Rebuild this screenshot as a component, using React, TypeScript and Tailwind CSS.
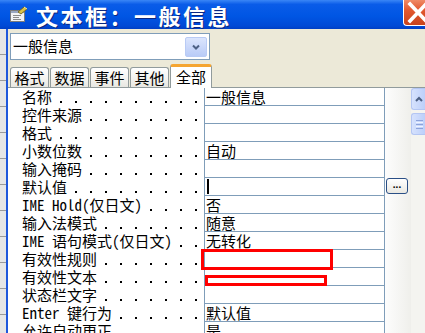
import React from 'react';

const F = "font-['Noto_Sans_Mono_CJK_SC','Noto_Sans_CJK_SC',sans-serif]";

const rows: { label: string; value?: string; caret?: boolean }[] = [
  { label: '名称', value: '一般信息' },
  { label: '控件来源' },
  { label: '格式' },
  { label: '小数位数', value: '自动' },
  { label: '输入掩码' },
  { label: '默认值', caret: true },
  { label: 'IME Hold(仅日文)', value: '否' },
  { label: '输入法模式', value: '随意' },
  { label: 'IME 语句模式(仅日文)', value: '无转化' },
  { label: '有效性规则' },
  { label: '有效性文本' },
  { label: '状态栏文字' },
  { label: 'Enter 键行为', value: '默认值' },
  { label: '允许自动更正', value: '是' },
];

const tabs = ['格式', '数据', '事件', '其他'];

function FormIcon() {
  return (
    <svg width="19" height="17" viewBox="0 0 19 17" className="shrink-0">
      <rect x="1.5" y="4.5" width="14" height="11" fill="#f4f4f4" stroke="#7c7c7c" />
      <rect x="2" y="5" width="13" height="2" fill="#9aa7c0" />
      <path d="M4 9.5h8M4 11.5h6M4 13.5h8" stroke="#8a8a8a" />
      <path d="M9 6 L15 1 L18 3 L12 8 Z" fill="#d8c24a" stroke="#6b5a10" strokeWidth="0.8" />
      <path d="M15 1 L18 3" stroke="#fff3a0" />
    </svg>
  );
}

function CloseButton() {
  return (
    <div className="shrink-0 -mr-[8px] self-start w-[30px] h-[26px] rounded-bl-[4px] border-l border-b border-white bg-[linear-gradient(#ef8a66,#e2582f_40%,#c8431d)]">
      <svg width="30" height="26" viewBox="0 0 30 26">
        <path d="M6 4 L22 21 M22 4 L6 21" stroke="#fff" strokeWidth="3.6" strokeLinecap="square" />
      </svg>
    </div>
  );
}

function Dots() {
  return (
    <span className="flex items-end pb-[3px] ml-[8px] shrink-0">
      {Array.from({ length: 14 }).map((_, i) => (
        <span key={i} className="w-[2px] h-[2px] bg-black mr-[13px] shrink-0" />
      ))}
    </span>
  );
}

function Row({ label, value, caret }: { label: string; value?: string; caret?: boolean }) {
  return (
    <div className="flex h-[18px] shrink-0 text-[15px] leading-[17px]">
      <div className="w-[196px] flex pl-[14px] overflow-hidden whitespace-nowrap">
        <span className="shrink-0">{label}</span>
        <Dots />
      </div>
      <div className="w-[181px] border-x border-b border-[#7F9DB9] pl-[1px] flex items-center whitespace-nowrap overflow-hidden">
        {caret ? <span className="w-[2px] h-[15px] bg-black ml-[1px]" /> : value}
      </div>
      <div className="flex-1 bg-[linear-gradient(90deg,#fdfdfd,#efefeb)]">
        {caret && (
          <div className="ml-[1px] w-[22px] h-[16px] rounded-[3px] border border-[#2a4f86] bg-[linear-gradient(#ffffff,#e9e8e2)] flex items-center justify-center">
            <span className="text-[10px] font-bold leading-none font-['Liberation_Sans',sans-serif] -mt-[3px]">...</span>
          </div>
        )}
      </div>
    </div>
  );
}

function ScrollBar() {
  return (
    <div className="flex-1 flex flex-col bg-[#F4F4F0]">
      <div className="h-[22px] rounded-l-[3px] border border-r-0 border-[#b4c6f3] bg-[linear-gradient(90deg,#d6e2fd,#bccffa)] flex items-center pl-[3px]">
        <svg width="8" height="6" viewBox="0 0 8 6">
          <path d="M1 5 L4 2 L7 5" fill="none" stroke="#4d6185" strokeWidth="2" />
        </svg>
      </div>
      <div className="mt-[3px] h-[22px] rounded-l-[3px] border border-r-0 border-[#b4c6f3] bg-[linear-gradient(90deg,#d6e2fd,#bccffa)] flex flex-col justify-center gap-[1px] pl-[4px]">
        <span className="w-[7px] h-[1px] bg-[#8da3db]" />
        <span className="w-[7px] h-[1px] bg-[#eef3ff]" />
        <span className="w-[7px] h-[1px] bg-[#8da3db]" />
        <span className="w-[7px] h-[1px] bg-[#eef3ff]" />
        <span className="w-[7px] h-[1px] bg-[#8da3db]" />
      </div>
    </div>
  );
}

export default function App() {
  return (
    <div className={`w-[425px] h-[333px] overflow-hidden bg-[#ECE9D8] ${F} text-black flex flex-col`}>
      <div className="h-[29px] shrink-0 flex items-center bg-[linear-gradient(#3a86f6,#0a5ce8_15%,#0056e4_55%,#0049d5_90%,#003fc4)]">
        <div className="ml-[9px]">
          <FormIcon />
        </div>
        <span className="ml-[8px] text-white font-bold text-[22px] leading-none tracking-[2.5px] [text-shadow:1px_1px_0_#0b2680] font-['Noto_Sans_CJK_SC',sans-serif]">
          文本框：一般信息
        </span>
        <div className="flex-1" />
        <CloseButton />
      </div>

      <div className="flex flex-1 min-h-0">
        <div className="w-[6px] bg-[repeating-linear-gradient(180deg,#e6e6e6_0,#e6e6e6_25px,#9a9a9a_25px,#9a9a9a_26px)]" />
        <div className="w-[2px] bg-[#1f58dc]" />
        <div className="flex-1 flex flex-col min-w-0">
          <div className="pt-[4px] pl-[2px]">
            <div className="w-[200px] h-[27px] border border-[#7F9DB9] bg-white flex items-center">
              <span className="pl-[2px] text-[15px] leading-[17px] pb-[3px] flex-1">一般信息</span>
              <div className="w-[22px] h-[20px] mr-[2px] rounded-[2px] border border-[#b9cbf5] bg-[linear-gradient(#dbe5fd,#b9cbf7)] flex items-center justify-center">
                <svg width="8" height="6" viewBox="0 0 8 6">
                  <path d="M1 1.5 L4 4.5 L7 1.5" fill="none" stroke="#4d6185" strokeWidth="2" />
                </svg>
              </div>
            </div>
          </div>

          <div className="mt-[4px] h-[23px] flex items-end pl-[2px] gap-[1px] text-[15px] leading-[17px]">
            {tabs.map((t) => (
              <div
                key={t}
                className="w-[39px] h-[20px] rounded-t-[3px] border border-b-0 border-[#919B9C] bg-[linear-gradient(#ffffff,#f3f2ee_60%,#e8e7e1)] flex items-center justify-center"
              >
                {t}
              </div>
            ))}
            <div className="relative z-10 -mb-[1px] w-[42px] h-[24px] rounded-t-[3px] border-x border-t-[3px] border-[#919B9C] border-t-[#f5a531] bg-white flex justify-center pt-[1px]">
              全部
            </div>
          </div>

          <div className="relative flex flex-1 min-h-0 border-t border-[#919B9C]">
            <div className="w-[403px] bg-white flex flex-col overflow-hidden">
              {rows.map((r) => (
                <Row key={r.label} {...r} />
              ))}
            </div>
            <ScrollBar />
            <div className="absolute left-[193px] top-[161px] w-[132px] h-[21px] border-[3px] border-[#ff0000]" />
            <div className="absolute left-[197px] top-[187px] w-[122px] h-[11px] border-[3px] border-[#ff0000]" />
          </div>
        </div>
      </div>
    </div>
  );
}
